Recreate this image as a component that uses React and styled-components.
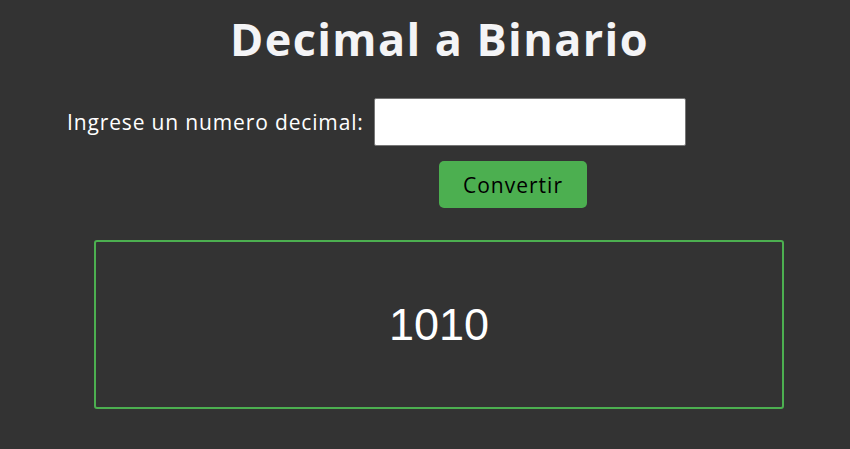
import React from "react";
import styled, { createGlobalStyle } from "styled-components";

const Global = createGlobalStyle`
  html, body { margin: 0; padding: 0; background: #333333; }
  body { font-family: "Open Sans", Lato, sans-serif; color: #f5f5f7; }
`;

const Page = styled.div`
  width: 850px;
  height: 449px;
  display: flex;
  flex-direction: column;
  box-sizing: border-box;
  padding-top: 8px;
`;

const Title = styled.h1`
  margin: 0;
  padding-left: 29px;
  text-align: center;
  font-size: 45px;
  line-height: 62px;
  font-weight: 700;
  letter-spacing: 1.4px;
  color: #f4f4f6;
`;

const FormRow = styled.div`
  display: flex;
  align-items: center;
  gap: 10px;
  margin-top: 28px;
  padding-left: 67px;
`;

const Label = styled.label`
  font-size: 21px;
  letter-spacing: 0.85px;
  color: #ffffff;
`;

const Input = styled.input`
  box-sizing: border-box;
  width: 312px;
  height: 48px;
  border: 1px solid #767676;
  border-radius: 2px;
  background: #ffffff;
  font-size: 18px;
  padding: 0 8px;
`;

const ButtonRow = styled.div`
  display: flex;
  margin-top: 15px;
  padding-left: 439px;
`;

const Button = styled.button`
  box-sizing: border-box;
  width: 148px;
  height: 47px;
  border: none;
  border-radius: 5px;
  background: #4caf50;
  color: #000000;
  font-family: "Open Sans", Lato, sans-serif;
  font-size: 21px;
  letter-spacing: 1px;
`;

const Result = styled.div`
  box-sizing: border-box;
  margin: 32px 0 0 94px;
  width: 690px;
  height: 169px;
  border: 2px solid #4caf50;
  border-radius: 3px;
  display: flex;
  align-items: center;
  justify-content: center;
`;

const Binary = styled.span`
  font-family: "Liberation Sans", Arial, Helvetica, sans-serif;
  font-size: 45px;
  font-weight: 400;
  color: #ffffff;
`;

export default function App() {
  return (
    <>
      <Global />
      <Page>
        <Title>Decimal a Binario</Title>
        <FormRow>
          <Label htmlFor="dec">Ingrese un numero decimal:</Label>
          <Input id="dec" type="text" />
        </FormRow>
        <ButtonRow>
          <Button>Convertir</Button>
        </ButtonRow>
        <Result>
          <Binary>1010</Binary>
        </Result>
      </Page>
    </>
  );
}
